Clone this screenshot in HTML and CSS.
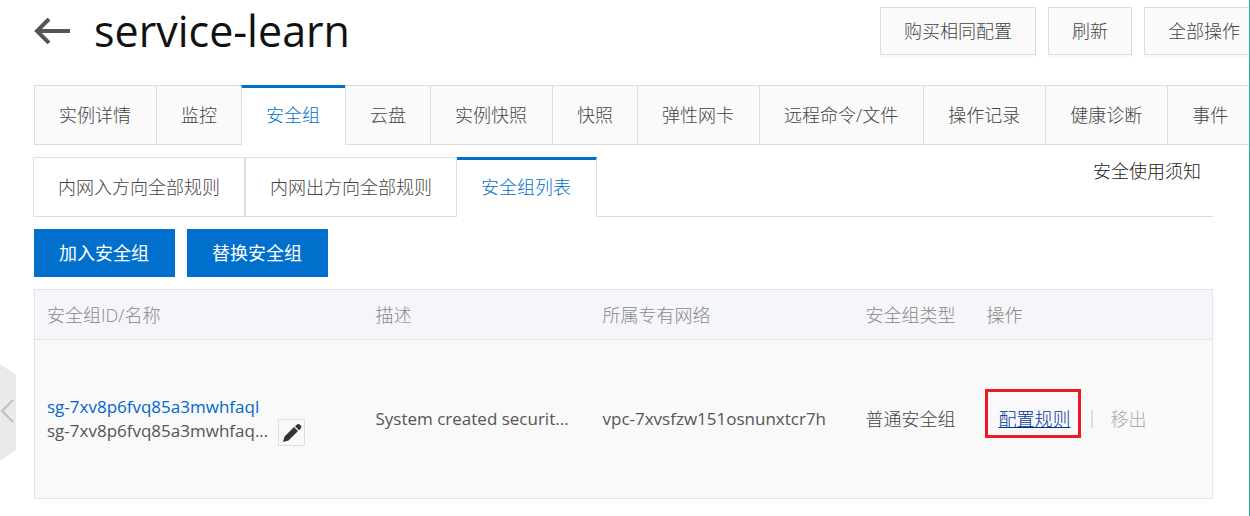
FILE: index.html
```html
<!DOCTYPE html>
<html lang="zh-CN">
<head>
<meta charset="utf-8">
<title>service-learn</title>
<link rel="stylesheet" href="styles.css">
</head>
<body>
<button class="drawer" type="button" aria-label="展开侧栏">
  <svg viewBox="0 0 16 98" width="16" height="98" aria-hidden="true">
    <path d="M0 0 L16 11 V86 L0 97 Z" fill="#eaeaea"/>
    <path d="M13 36 L2 47 L13 58" fill="none" stroke="#bfbfbf" stroke-width="2"/>
  </svg>
</button>
<main class="page">
  <header class="header">
    <a class="back" href="#" aria-label="返回">
      <svg viewBox="0 0 36 26" width="36" height="26" aria-hidden="true">
        <path d="M3 13 H36 M15 1 L3 13 L15 25" fill="none" stroke="#555" stroke-width="4"/>
      </svg>
    </a>
    <h1 class="title">service-learn</h1>
    <div class="actions">
      <button class="btn" type="button">购买相同配置</button>
      <button class="btn" type="button">刷新</button>
      <button class="btn btn-edge" type="button">全部操作</button>
    </div>
  </header>
  <nav class="tabs">
    <a class="tab" href="#">实例详情</a>
    <a class="tab tab-short" href="#">监控</a>
    <a class="tab tab-active" href="#">安全组</a>
    <a class="tab tab-short" href="#">云盘</a>
    <a class="tab" href="#">实例快照</a>
    <a class="tab tab-short" href="#">快照</a>
    <a class="tab" href="#">弹性网卡</a>
    <a class="tab" href="#">远程命令/文件</a>
    <a class="tab" href="#">操作记录</a>
    <a class="tab" href="#">健康诊断</a>
    <a class="tab tab-last" href="#">事件</a>
  </nav>
  <section class="content">
    <nav class="subtabs">
      <a class="subtab" href="#">内网入方向全部规则</a>
      <a class="subtab" href="#">内网出方向全部规则</a>
      <a class="subtab subtab-active" href="#">安全组列表</a>
      <a class="notice" href="#">安全使用须知</a>
    </nav>
    <div class="toolbar">
      <button class="primary" type="button">加入安全组</button>
      <button class="primary" type="button">替换安全组</button>
    </div>
    <table class="groups">
      <colgroup><col class="c-id"><col class="c-desc"><col class="c-vpc"><col class="c-type"><col></colgroup>
      <thead>
        <tr><th>安全组ID/名称</th><th>描述</th><th>所属专有网络</th><th>安全组类型</th><th>操作</th></tr>
      </thead>
      <tbody>
        <tr>
          <td class="latin">
            <div class="ident">
              <div class="names">
                <a class="link" href="#">sg-7xv8p6fvq85a3mwhfaql</a>
                <span>sg-7xv8p6fvq85a3mwhfaq...</span>
              </div>
              <button class="edit" type="button" aria-label="编辑">
                <svg viewBox="0 0 20 20" width="20" height="20" aria-hidden="true">
                  <path d="M1 19 L2.5 13.5 L12 4 L16 8 L6.5 17.5 Z M13 3.2 L15 1.6 Q16.5 .4 18 1.8 L18.8 2.6 Q20 4 18.8 5.5 L17 7.2 Z" fill="#333"/>
                </svg>
              </button>
            </div>
          </td>
          <td class="latin">System created securit...</td>
          <td class="latin">vpc-7xvsfzw151osnunxtcr7h</td>
          <td>普通安全组</td>
          <td>
            <div class="ops">
              <a class="configure" href="#">配置规则</a>
              <span class="sep"></span>
              <button class="remove" type="button" disabled>移出</button>
            </div>
          </td>
        </tr>
      </tbody>
    </table>
  </section>
</main>
</body>
</html>
```
FILE: styles.css
```css
* { box-sizing: border-box; }
body {
  margin: 0;
  min-height: 100vh;
  background: #fff;
  border-right: 1px solid #2aa9ad;
  color: #444;
  font: 300 18px/24px "Open Sans", "Noto Sans CJK SC", sans-serif;
}
a { color: inherit; text-decoration: none; }
button { font: inherit; color: inherit; border-radius: 0; white-space: nowrap; }
.page { padding: 7px 0 16px 34px; }
.drawer {
  position: absolute;
  left: 0;
  top: 364px;
  padding: 0;
  border: 0;
  background: none;
  line-height: 0;
}
.header { display: flex; height: 78px; }
.back { padding-top: 11px; line-height: 0; }
.title { margin: 0 0 0 24px; color: #111; font-size: 43px; font-weight: 400; line-height: 48px; }
.actions { display: flex; gap: 12px; margin-left: auto; }
.btn {
  height: 48px;
  padding: 0 23px;
  border: 1px solid #ddd;
  background: #fafafa;
  box-shadow: 0 3px 0 #fafafa;
}
.btn-edge { padding-right: 9px; border-right: 0; }
.tabs { display: flex; white-space: nowrap; }
.tab {
  height: 60px;
  padding: 0 25px 0 24px;
  border: 1px solid #ddd;
  border-right: 0;
  background: #fafafa;
  line-height: 58px;
}
.tab-short { padding-right: 24px; }
.tab-active {
  border-top: 3px solid #0070cc;
  border-bottom: 0;
  background: #fff;
  color: #0070cc;
  line-height: 54px;
}
.tab-last { flex: 1; padding-right: 0; }
.content { margin: 12px 36px 0 0; }
.subtabs { display: flex; height: 60px; border-bottom: 1px solid #ddd; white-space: nowrap; }
.subtab {
  height: 60px;
  padding: 0 24px;
  border: 1px solid #ddd;
  line-height: 59px;
}
.subtab:first-child { margin-left: -1px; }
.subtab-active {
  padding-right: 25px;
  border-top: 3px solid #0070cc;
  border-left: 0;
  border-bottom: 0;
  background: #fff;
  color: #0070cc;
  line-height: 55px;
}
.notice { margin-left: auto; padding: 2px 12px 0 0; color: #222; }
.toolbar { display: flex; gap: 12px; margin: 12px 0; }
.primary { height: 48px; padding: 0 26px 0 25px; border: 0; background: #0070cc; color: #fff; font-weight: 400; }
.groups {
  width: 100%;
  border: 1px solid #e1e5ea;
  border-collapse: collapse;
  table-layout: fixed;
}
.groups th, .groups td { padding: 0 0 0 12px; text-align: left; white-space: nowrap; }
.groups th { height: 50px; background: #f5f6fa; color: #888; font-weight: 300; border-bottom: 1px solid #e1e5ea; }
.groups td { height: 159px; background: #f9f9f9; }
.groups .latin { color: #555; font-size: 17px; font-weight: 400; }
.c-id { width: 329px; }
.c-desc { width: 227px; }
.c-vpc { width: 263px; }
.c-type { width: 121px; }
.ident { display: flex; align-items: flex-end; gap: 10px; }
.names { display: flex; flex-direction: column; }
.link { color: #06c; }
.edit { width: 27px; height: 27px; margin-bottom: -3px; padding: 2px; border: 1px solid #ddd; background: #f9f9f9; line-height: 0; }
.ops { display: flex; align-items: center; padding-left: 12px; }
.configure { position: relative; color: #039; text-decoration: underline; }
/* Highlight frame drawn over the cell */
.configure::after {
  content: "";
  position: absolute;
  inset: -18px -10px -7px -14px;
  border: 3px solid #ed1c24;
}
.sep { width: 2px; height: 18px; margin: 0 18px 0 20px; background: #ddd; }
.remove { padding: 0; border: 0; background: none; color: #aaa; }
```
